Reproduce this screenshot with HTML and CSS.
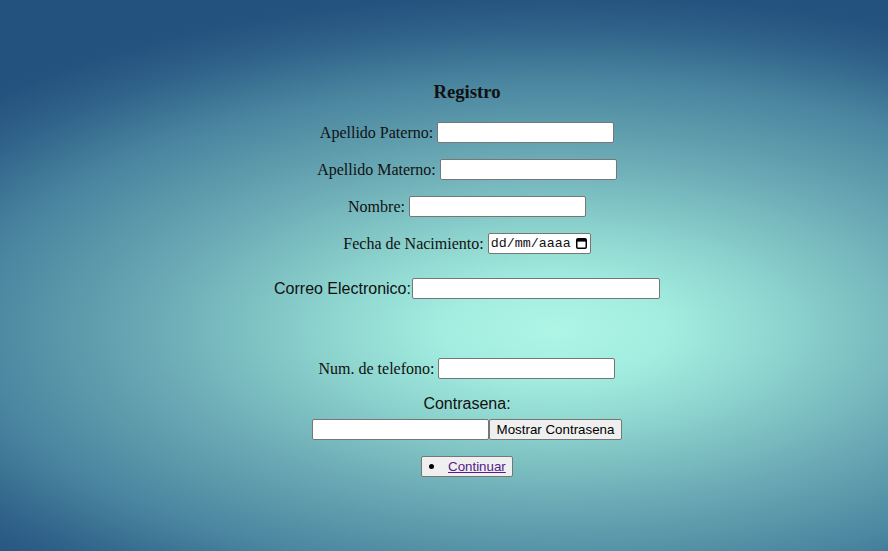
FILE: index.html
```html
<!DOCTYPE html>
<html lang="es">
<head>
<meta charset="utf-8">
<title>Registro</title>
<link rel="stylesheet" href="styles.css">
</head>
<body>
<main class="page">
  <h3 class="title">Registro</h3>
  <form class="form">
    <div class="row"><label class="lbl">Apellido Paterno:</label><input class="field" type="text"></div>
    <div class="row"><label class="lbl">Apellido Materno:</label><input class="field" type="text"></div>
    <div class="row"><label class="lbl">Nombre:</label><input class="field" type="text"></div>
    <div class="row row-date"><label class="lbl">Fecha de Nacimiento:</label>
      <div class="date-box"><span class="date-text">dd/mm/aaaa</span>
        <svg class="cal" width="11" height="11" viewBox="0 0 11 11" aria-hidden="true"><rect x="0.75" y="0.75" width="9.5" height="9.5" rx="1.2" fill="none" stroke="#000" stroke-width="1.5"/><rect x="1" y="1" width="9" height="2.6" fill="#000"/></svg>
      </div>
    </div>
    <div class="row row-mail"><label class="lbl-sans">Correo Electronico:</label><input class="field field-wide" type="email"></div>
    <div class="row row-tel"><label class="lbl">Num. de telefono:</label><input class="field" type="tel"></div>
    <div class="pw-label">Contrasena:</div>
    <div class="row row-pw"><input class="field" type="password"><button class="btn btn-show" type="button">Mostrar Contrasena</button></div>
    <button class="btn btn-continue" type="button"><span class="dot"></span><a class="link" href="#">Continuar</a></button>
  </form>
</main>
</body>
</html>
```
FILE: styles.css
```css
html, body {
  margin: 0;
  height: 100%;
}
body {
  min-height: 100vh;
  font-family: "Liberation Serif", "Times New Roman", serif;
  font-size: 16px;
  color: #111;
  background: radial-gradient(800px 345px at 555px 330px,
    #aef5e6 0%,
    #a2ede0 14%,
    #8ed5cf 28%,
    #68a7b3 52%,
    #4a86a0 72%,
    #2f6189 88%,
    #25537f 97%,
    #24527e 100%);
  background-color: #24527e;
}
.page {
  padding: 81px 0 0 46px;
  text-align: center;
}
.title {
  margin: 0 0 19px;
  font-size: 18.72px;
  line-height: 22px;
  font-weight: bold;
}
.form {
  display: flex;
  flex-direction: column;
  align-items: center;
}
.row {
  display: flex;
  align-items: center;
  justify-content: center;
  gap: 4px;
  height: 21px;
  margin-bottom: 16px;
}
.lbl {
  line-height: 18px;
}
.lbl-sans {
  font-family: "Liberation Sans", Arial, sans-serif;
  font-size: 16px;
  line-height: 18px;
}
.field {
  box-sizing: border-box;
  width: 177px;
  height: 21px;
  margin: 0;
  padding: 1px 2px;
  border: 1px solid #767676;
  border-radius: 2px;
  background: #fff;
  font-family: "Liberation Sans", Arial, sans-serif;
  font-size: 13.333px;
}
.field-wide {
  width: 248px;
}
.row-date { margin-bottom: 24px; }
.row-mail { gap: 1px; margin-bottom: 59px; }
.row-tel { margin-bottom: 16px; }
.row-pw { gap: 0; margin-bottom: 16px; }
.date-box {
  box-sizing: border-box;
  width: 103px;
  height: 21px;
  display: flex;
  align-items: center;
  justify-content: space-between;
  padding: 0 3px 0 2px;
  border: 1px solid #767676;
  border-radius: 2px;
  background: #fff;
}
.date-text {
  font-family: "Liberation Mono", "DejaVu Sans Mono", monospace;
  font-size: 13.333px;
  line-height: 15px;
}
.cal { display: block; }
.pw-label {
  font-family: "Liberation Sans", Arial, sans-serif;
  font-size: 16px;
  line-height: 18px;
  height: 18px;
  margin-bottom: 6px;
}
.btn {
  box-sizing: border-box;
  height: 21px;
  margin: 0;
  padding: 0 6px;
  border: 1px solid #767676;
  border-radius: 2px;
  background: #efefef;
  color: #000;
  font-family: "Liberation Sans", Arial, sans-serif;
  font-size: 13.333px;
}
.btn-show {
  width: 133px;
}
.btn-continue {
  width: 92px;
  display: flex;
  align-items: center;
  padding: 0 0 0 7px;
}
.dot {
  width: 5px;
  height: 5px;
  border-radius: 50%;
  background: #000;
  margin-right: 14px;
}
.link {
  color: #551a8b;
  text-decoration: underline;
}
```
